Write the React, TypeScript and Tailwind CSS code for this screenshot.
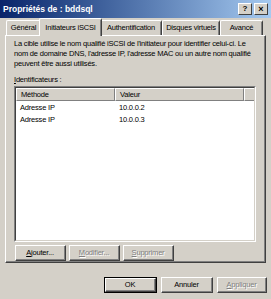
import React from "react";

const font = { fontFamily: '"Liberation Sans", Arial, sans-serif' };

function Btn({ children, disabled, def, w }: { children: React.ReactNode; disabled?: boolean; def?: boolean; w: string }) {
  return (
    <div className={`${w} h-[16px] ${def ? "border border-black" : ""}`}>
      <div className="w-full h-full border-t border-l border-white border-b border-r border-b-[#404040] border-r-[#404040] bg-[#D4D0C8]">
        <div className="w-full h-full border-b border-r border-b-[#808080] border-r-[#808080] flex items-center justify-center text-[7.5px] tracking-[-0.2px] leading-none whitespace-nowrap">
          <span className={disabled ? "text-[#808080] [text-shadow:1px_1px_0_#fff]" : "text-black"}>{children}</span>
        </div>
      </div>
    </div>
  );
}

function Tab({ label, selected, w }: { label: string; selected?: boolean; w: string }) {
  return (
    <div
      className={`${w} ${selected ? "h-[18px] -mx-[2px] z-10 bg-[#D4D0C8] -mb-px" : "h-[15px]"} shrink-0 border-t border-l border-white border-r border-r-[#404040] rounded-t-[2px] flex items-center justify-center text-[7.5px] tracking-[-0.2px] leading-none text-black relative whitespace-nowrap`}
    >
      <div className="absolute right-0 top-px bottom-0 w-px bg-[#808080]" />
      {label}
    </div>
  );
}

export default function App() {
  return (
    <div className="w-[271px] h-[299px] bg-[#D4D0C8] overflow-hidden flex flex-col" style={font}>
      {/* Title bar */}
      <div className="h-[18px] bg-gradient-to-r from-[#0A246A] to-[#A6CAF0] flex items-center pl-[3px] pr-[3px]">
        <span className="text-white font-bold text-[8.5px] leading-none flex-1">Propriétés de : bddsql</span>
        <div className="flex gap-[2px]">
          <div className="w-[14px] h-[12px] bg-[#D4D0C8] border border-t-white border-l-white border-b-[#404040] border-r-[#404040] flex items-center justify-center text-[8px] font-bold leading-none">?</div>
          <div className="w-[14px] h-[12px] bg-[#D4D0C8] border border-t-white border-l-white border-b-[#404040] border-r-[#404040] flex items-center justify-center text-[9px] font-bold leading-none">×</div>
        </div>
      </div>

      {/* Tabs */}
      <div className="h-[17px] flex items-end pl-[6px] relative z-10">
        <Tab label="Général" w="w-[35px]" />
        <Tab label="Initiateurs iSCSI" w="w-[63px]" selected />
        <Tab label="Authentification" w="w-[62px]" />
        <Tab label="Disques virtuels" w="w-[58px]" />
        <Tab label="Avancé" w="w-[43px]" />
      </div>

      {/* Panel */}
      <div className="mx-[5px] h-[228px] border-t border-l border-white border-b border-r border-b-[#404040] border-r-[#404040]">
        <div className="w-full h-full border-b border-r border-b-[#808080] border-r-[#808080] pl-[8px] pr-[6px] pt-[3px] flex flex-col">
          <p className="text-[7.5px] tracking-[-0.2px] leading-[10px] text-black w-[246px]">
            La cible utilise le nom qualifié iSCSI de l'initiateur pour identifier celui-ci. Le nom de domaine DNS, l'adresse IP, l'adresse MAC ou un autre nom qualifié peuvent être aussi utilisés.
          </p>
          <p className="text-[7.5px] tracking-[-0.2px] leading-[10px] text-black mt-[6px]">
            <span className="underline">I</span>dentificateurs :
          </p>
          <div className="mt-[1px] h-[162px] w-[242px] border-t border-l border-t-[#808080] border-l-[#808080] border-b border-r border-b-white border-r-white">
            <div className="w-full h-full border-t border-l border-t-[#404040] border-l-[#404040] border-b border-r border-b-[#D4D0C8] border-r-[#D4D0C8] bg-white flex flex-col">
              <div className="flex h-[13px] text-[7.5px] tracking-[-0.2px]">
                <div className="w-[99px] h-full bg-[#D4D0C8] border-t border-l border-white border-b border-r border-b-[#808080] border-r-[#808080] leading-[10px] flex items-center pl-[4px]">Méthode</div>
                <div className="w-[129px] h-full bg-[#D4D0C8] border-t border-l border-white border-b border-r border-b-[#808080] border-r-[#808080] leading-[10px] flex items-center pl-[4px]">Valeur</div>
                <div className="flex-1 h-full bg-[#D4D0C8] border-t border-l border-white border-b border-b-[#808080]" />
              </div>
              <div className="flex text-[7.5px] tracking-[-0.2px] leading-[12px] mt-[1px]">
                <div className="w-[99px] pl-[4px]">Adresse IP</div>
                <div className="pl-[4px]">10.0.0.2</div>
              </div>
              <div className="flex text-[7.5px] tracking-[-0.2px] leading-[12px]">
                <div className="w-[99px] pl-[4px]">Adresse IP</div>
                <div className="pl-[4px]">10.0.0.3</div>
              </div>
            </div>
          </div>
          <div className="flex gap-[3px] mt-[3px] ml-px">
            <Btn w="w-[51px]"><span className="underline">A</span>jouter...</Btn>
            <Btn w="w-[51px]" disabled><span className="underline">M</span>odifier...</Btn>
            <Btn w="w-[51px]" disabled><span className="underline">S</span>upprimer</Btn>
          </div>
        </div>
      </div>

      {/* Bottom buttons */}
      <div className="flex justify-end gap-[4px] pr-[4px] mt-[14px]">
        <Btn w="w-[53px]" def>OK</Btn>
        <Btn w="w-[52px]">Annuler</Btn>
        <Btn w="w-[50px]" disabled><span className="underline">A</span>ppliquer</Btn>
      </div>
    </div>
  );
}
